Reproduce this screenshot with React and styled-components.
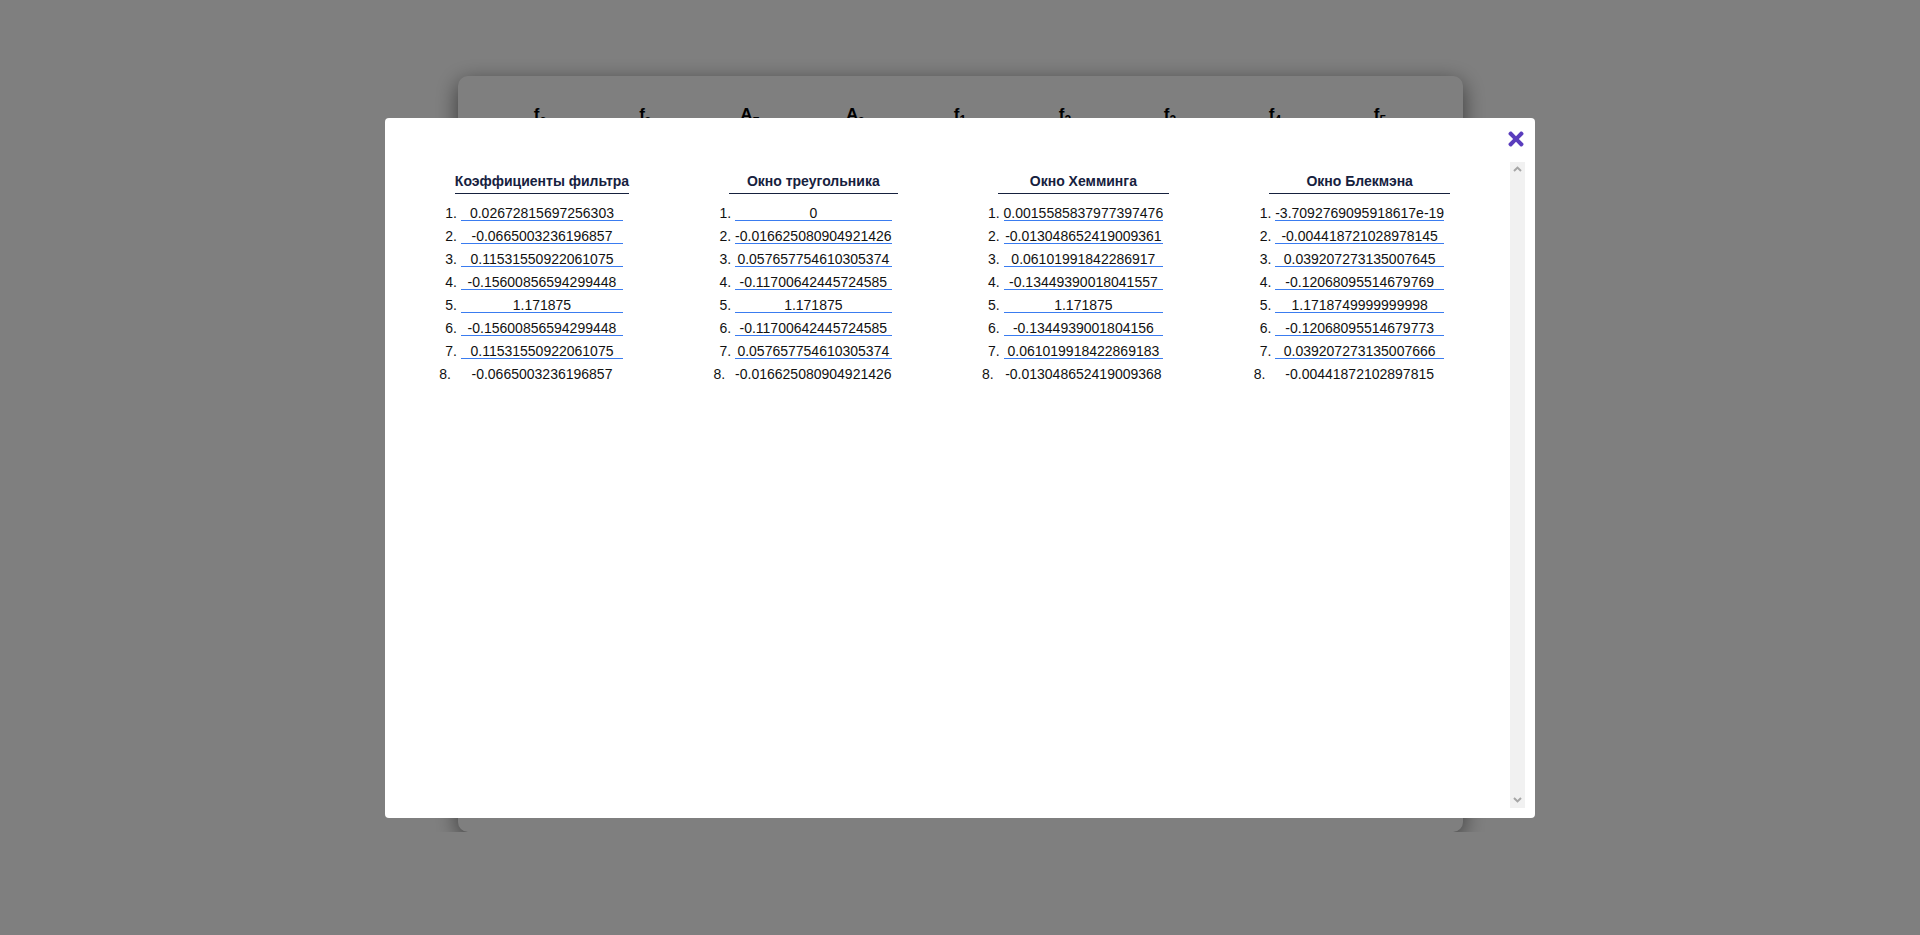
import React from "react";
import styled, { createGlobalStyle } from "styled-components";
import { FaTimes } from "react-icons/fa";

const GlobalStyle = createGlobalStyle`
  body {
    margin: 0;
    background: #fff;
    font-family: "Liberation Sans", Arial, sans-serif;
  }
`;

const Page = styled.div`
  padding-top: 76px;
`;

const Card = styled.div`
  width: 1005px;
  height: 756px;
  margin: 0 auto;
  box-sizing: border-box;
  padding: 29px 28px 0;
  background: #fff;
  border-radius: 10px;
  box-shadow: 0 6px 22px rgba(0, 0, 0, 0.55);
`;

const ParamRow = styled.div`
  display: grid;
  grid-template-columns: repeat(9, 105px);
  justify-content: center;
`;

const Param = styled.div`
  text-align: center;
  font-weight: bold;
  font-size: 17px;
  color: #000;

  sub {
    font-size: 12px;
  }
`;

const Overlay = styled.div`
  position: fixed;
  inset: 0;
  background: rgba(0, 0, 0, 0.5);
  display: flex;
  align-items: center;
  justify-content: center;
`;

const Modal = styled.div`
  width: 1150px;
  height: 700px;
  box-sizing: border-box;
  padding: 10px;
  background: #fff;
  border-radius: 4px;
  display: flex;
  flex-direction: column;
`;

const ModalTop = styled.div`
  height: 34px;
  flex-shrink: 0;
  display: flex;
  justify-content: flex-end;
  align-items: flex-start;
`;

const CloseButton = styled.button`
  border: none;
  background: transparent;
  padding: 0;
  margin: 0 -2px 0 0;
  color: #5a3dbd;
  cursor: pointer;
  display: flex;
  line-height: 0;
`;

const ModalBody = styled.div`
  flex: 1;
  min-height: 0;
  display: flex;
`;

const Scroll = styled.div`
  flex: 1;
  overflow-y: auto;
`;

const ScrollTrack = styled.div`
  width: 15px;
  flex-shrink: 0;
  background: #f1f1f1;
  display: flex;
  flex-direction: column;
  justify-content: space-between;
`;

const ScrollArrow = styled.div`
  height: 15px;
  display: flex;
  align-items: center;
  justify-content: center;

  svg {
    transform: ${(p) => (p.$down ? "rotate(180deg)" : "none")};
  }
`;

const Columns = styled.div`
  display: flex;
  justify-content: center;
  align-items: flex-start;
  gap: 100px;
  padding-top: 11px;
`;

const Column = styled.div`
  display: flex;
  flex-direction: column;
`;

const Title = styled.div`
  font-size: 14px;
  line-height: 16px;
  font-weight: bold;
  color: #16213e;
  text-align: center;
  white-space: nowrap;
  padding-bottom: 4px;
  border-bottom: 1px solid #16213e;
`;

const List = styled.ol`
  margin: 12px 0 0;
  padding: 0;
  list-style: decimal outside;
  font-size: 14px;
  color: #222;
`;

const Item = styled.li`
  margin: 0 6px 8px;
  line-height: 14px;
  text-align: center;
  white-space: nowrap;
  color: #111;
  border-bottom: 1px solid #3a7cf0;

  &:last-child {
    margin: 0;
    border-bottom: none;
  }
`;

const Chevron = () => (
  <svg width="9" height="6" viewBox="0 0 9 6">
    <polyline points="1,5 4.5,1.6 8,5" fill="none" stroke="#a6a6a6" strokeWidth="2" />
  </svg>
);

const params = [
  ["f", "с"],
  ["f", "з"],
  ["A", "п"],
  ["A", "з"],
  ["f", "1"],
  ["f", "2"],
  ["f", "3"],
  ["f", "4"],
  ["f", "5"],
];

const tables = [
  {
    title: "Коэффициенты фильтра",
    values: [
      "0.02672815697256303",
      "-0.0665003236196857",
      "0.11531550922061075",
      "-0.15600856594299448",
      "1.171875",
      "-0.15600856594299448",
      "0.11531550922061075",
      "-0.0665003236196857",
    ],
  },
  {
    title: "Окно треугольника",
    values: [
      "0",
      "-0.016625080904921426",
      "0.057657754610305374",
      "-0.11700642445724585",
      "1.171875",
      "-0.11700642445724585",
      "0.057657754610305374",
      "-0.016625080904921426",
    ],
  },
  {
    title: "Окно Хемминга",
    values: [
      "0.0015585837977397476",
      "-0.013048652419009361",
      "0.06101991842286917",
      "-0.13449390018041557",
      "1.171875",
      "-0.1344939001804156",
      "0.061019918422869183",
      "-0.013048652419009368",
    ],
  },
  {
    title: "Окно Блекмэна",
    values: [
      "-3.7092769095918617e-19",
      "-0.004418721028978145",
      "0.039207273135007645",
      "-0.12068095514679769",
      "1.1718749999999998",
      "-0.12068095514679773",
      "0.039207273135007666",
      "-0.00441872102897815",
    ],
  },
];

export default function App() {
  return (
    <>
      <GlobalStyle />
      <Page>
        <Card>
          <ParamRow>
            {params.map(([base, sub], i) => (
              <Param key={i}>
                {base}
                <sub>{sub}</sub>
              </Param>
            ))}
          </ParamRow>
        </Card>
      </Page>
      <Overlay>
        <Modal>
          <ModalTop>
            <CloseButton>
              <FaTimes size={22} />
            </CloseButton>
          </ModalTop>
          <ModalBody>
            <Scroll>
              <Columns>
                {tables.map((t) => (
                  <Column key={t.title}>
                    <Title>{t.title}</Title>
                    <List>
                      {t.values.map((v, i) => (
                        <Item key={i}>{v}</Item>
                      ))}
                    </List>
                  </Column>
                ))}
              </Columns>
            </Scroll>
            <ScrollTrack>
              <ScrollArrow>
                <Chevron />
              </ScrollArrow>
              <ScrollArrow $down>
                <Chevron />
              </ScrollArrow>
            </ScrollTrack>
          </ModalBody>
        </Modal>
      </Overlay>
    </>
  );
}
